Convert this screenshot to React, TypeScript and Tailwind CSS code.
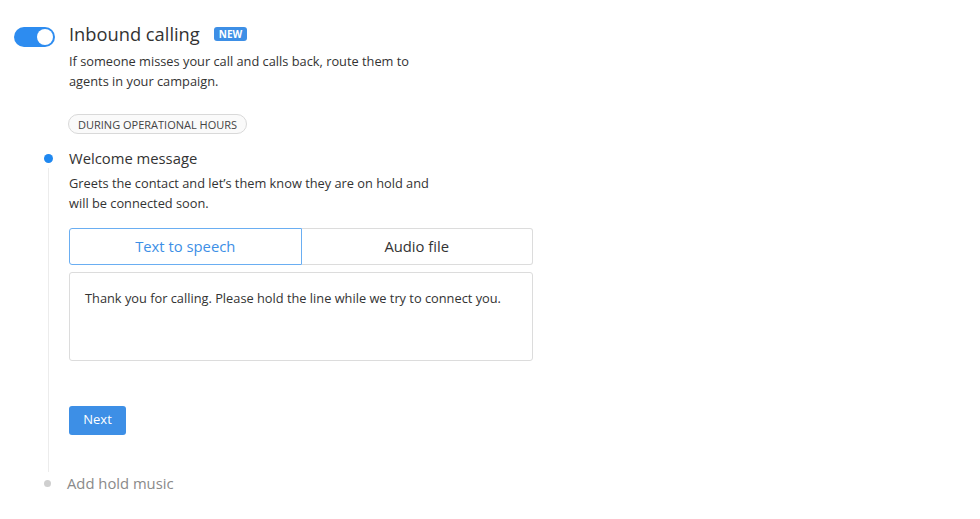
export default function App() {
  return (
    <div
      className="min-h-[519px] w-[980px] bg-white text-[#333]"
      style={{ fontFamily: '"Open Sans", "Liberation Sans", sans-serif' }}
    >
      <div className="flex pl-[14px] pt-[21px]">
        {/* toggle */}
        <div className="mt-[6px] flex h-[20px] w-[41px] items-center justify-end rounded-full bg-[#2d8cf0] pr-[2px]">
          <span className="h-[16px] w-[16px] rounded-full bg-white" />
        </div>
        <div className="ml-[14px]">
          <div className="flex items-center">
            <h1 className="text-[18.3px] leading-[26px] text-[#333]">Inbound calling</h1>
            <span className="ml-[14px] rounded-[3px] bg-[#3d8fe6] px-[5px] text-[10px] font-bold leading-[14px] text-white">
              NEW
            </span>
          </div>
          <p className="mt-[4px] w-[360px] text-[12.8px] leading-[20px] text-[#333]">
            If someone misses your call and calls back, route them to agents in your campaign.
          </p>
          <div className="mt-[23px] -ml-px inline-flex h-[20px] items-center rounded-full border border-[#d9d9d9] bg-[#fafafa] px-[9px] text-[11px] leading-none text-[#444]">
            DURING OPERATIONAL HOURS
          </div>
        </div>
      </div>

      {/* step 1 */}
      <div className="mt-[12px] flex">
        <div className="flex w-[69px] shrink-0 flex-col items-center pl-[43px] pr-[16px]">
          <span className="mt-[7px] h-[9px] w-[9px] shrink-0 rounded-full bg-[#1f88f0]" />
          <span className="mt-[5px] w-px flex-1 bg-[#ececec]" />
        </div>
        <div className="w-[464px] pb-[37px]">
          <h2 className="text-[14.8px] leading-[22px] text-[#333]">Welcome message</h2>
          <p className="mt-[4px] w-[380px] text-[12.8px] leading-[20px] text-[#333]">
            Greets the contact and let’s them know they are on hold and will be connected soon.
          </p>
          <div className="mt-[15px] flex h-[37px] text-[14.8px]">
            <div className="flex flex-1 items-center justify-center rounded-l-[3px] border border-[color:#6aaef2] text-[#3d8fe6]">
              Text to speech
            </div>
            <div className="flex flex-1 items-center justify-center rounded-r-[3px] border border-l-0 border-[#dcdcdc] text-[#333]">
              Audio file
            </div>
          </div>
          <div className="mt-[7px] h-[89px] rounded-[3px] border border-[#dcdcdc] px-[15px] pt-[15px] text-[12.8px] leading-[20px] text-[#333]">
            Thank you for calling. Please hold the line while we try to connect you.
          </div>
          <div className="mt-[45px] flex h-[29px] w-[57px] items-center justify-center rounded-[3px] bg-[#3d8fe6] text-[13px] text-white">
            Next
          </div>
        </div>
      </div>

      {/* step 2 */}
      <div className="flex">
        <div className="flex w-[67px] shrink-0 justify-center pl-[44px] pr-[16px]">
          <span className="mt-[8px] h-[7px] w-[7px] rounded-full bg-[#cfcfcf]" />
        </div>
        <p className="text-[14.8px] leading-[22px] text-[#8a8a8a]">Add hold music</p>
      </div>
    </div>
  );
}
